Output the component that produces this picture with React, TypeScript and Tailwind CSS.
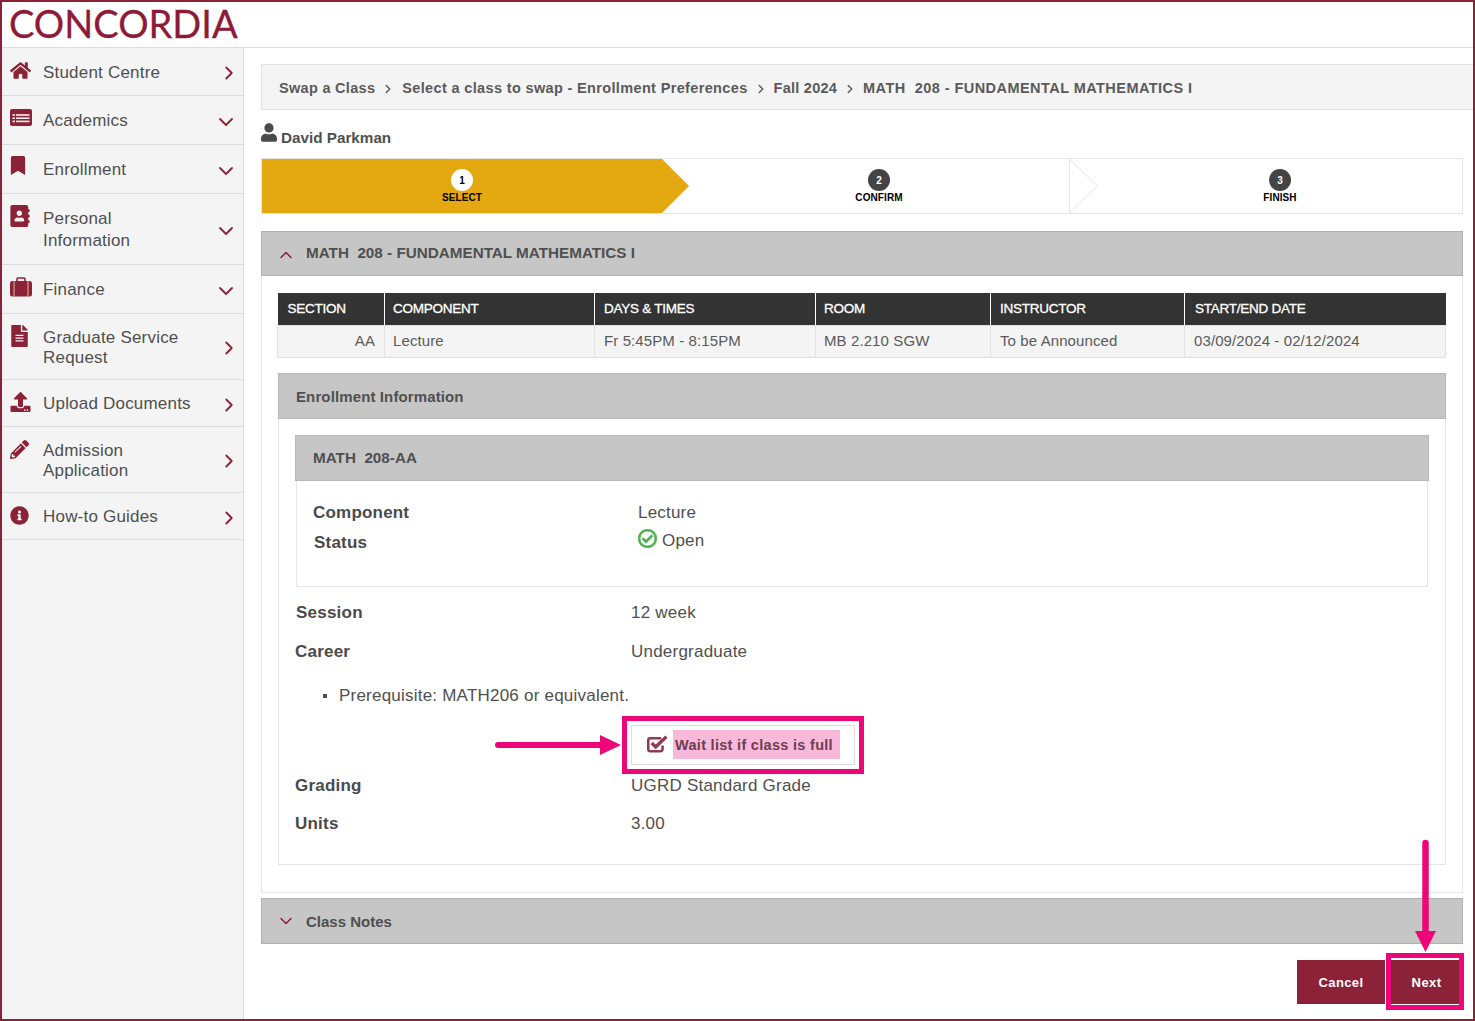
import React from "react";
import { ChevronRight, ChevronDown, ChevronUp } from "lucide-react";
import {
  FaHome, FaBookmark, FaAddressBook, FaFileAlt, FaUpload,
  FaPencilAlt, FaInfoCircle, FaUser, FaRegCheckCircle,
} from "react-icons/fa";

function ListAltIcon({ className }: { className?: string }) {
  return (
    <svg className={className} viewBox="0 0 22 17" fill="currentColor">
      <path d="M2 0 H20 a2 2 0 0 1 2 2 V15 a2 2 0 0 1 -2 2 H2 a2 2 0 0 1 -2 -2 V2 a2 2 0 0 1 2 -2 Z" />
      <g fill="#f7eef0">
        <rect x="2.5" y="5.2" width="2.5" height="1.6" />
        <rect x="6" y="5.2" width="13.5" height="1.6" />
        <rect x="2.5" y="8.4" width="2.5" height="1.6" />
        <rect x="6" y="8.4" width="13.5" height="1.6" />
        <rect x="2.5" y="11.6" width="2.5" height="1.6" />
        <rect x="6" y="11.6" width="13.5" height="1.6" />
      </g>
    </svg>
  );
}

function SuitcaseIcon({ className }: { className?: string }) {
  return (
    <svg className={className} viewBox="0 0 22 20" fill="currentColor">
      <path d="M7 4.5 V2 a1 1 0 0 1 1 -1 H14 a1 1 0 0 1 1 1 V4.5" fill="none" stroke="currentColor" strokeWidth="1.6" />
      <rect x="0" y="4" width="22" height="15.5" rx="2.5" />
      <rect x="3.6" y="4" width="0.9" height="15.5" fill="#e8c9a0" />
      <rect x="17.5" y="4" width="0.9" height="15.5" fill="#e8c9a0" />
    </svg>
  );
}

function CheckSquareIcon({ className }: { className?: string }) {
  return (
    <svg className={className} viewBox="0 0 20 17" fill="none" stroke="currentColor">
      <path d="M13.5 3 H3 a1.8 1.8 0 0 0 -1.8 1.8 V13.5 a1.8 1.8 0 0 0 1.8 1.8 H13 a1.8 1.8 0 0 0 1.8 -1.8 V10" strokeWidth="2.4" />
      <path d="M4.5 7.5 L8.3 11.2 L18.5 1.5" strokeWidth="3.2" />
    </svg>
  );
}

const menu = [
  { label: ["Student Centre"], Icon: FaHome, h: "h-[48px]", pad: "pt-[13px]", text: "pt-[14px]", iconCls: "w-[21px] h-[19px]", open: false, lh: "leading-[22px]" },
  { label: ["Academics"], Icon: ListAltIcon, h: "h-[49px]", pad: "pt-[13px]", text: "pt-[14px]", iconCls: "w-[22px] h-[17px]", open: true, lh: "leading-[22px]" },
  { label: ["Enrollment"], Icon: FaBookmark, h: "h-[49px]", pad: "pt-[11px]", text: "pt-[14px]", iconCls: "w-[16px] h-[19px]", open: true, lh: "leading-[22px]" },
  { label: ["Personal", "Information"], Icon: FaAddressBook, h: "h-[71px]", pad: "pt-[11px]", text: "pt-[14px]", iconCls: "w-[20px] h-[22px]", open: true, lh: "leading-[22px]" },
  { label: ["Finance"], Icon: SuitcaseIcon, h: "h-[49px]", pad: "pt-[12px]", text: "pt-[14px]", iconCls: "w-[22px] h-[20px]", open: true, lh: "leading-[22px]" },
  { label: ["Graduate Service", "Request"], Icon: FaFileAlt, h: "h-[66px]", pad: "pt-[11px]", text: "pt-[14px]", iconCls: "w-[19px] h-[22px]", open: false, lh: "leading-[20px]" },
  { label: ["Upload Documents"], Icon: FaUpload, h: "h-[47px]", pad: "pt-[12px]", text: "pt-[13px]", iconCls: "w-[21px] h-[20px]", open: false, lh: "leading-[22px]" },
  { label: ["Admission", "Application"], Icon: FaPencilAlt, h: "h-[66px]", pad: "pt-[13px]", text: "pt-[14px]", iconCls: "w-[19px] h-[19px]", open: false, lh: "leading-[20px]" },
  { label: ["How-to Guides"], Icon: FaInfoCircle, h: "h-[47px]", pad: "pt-[13px]", text: "pt-[13px]", iconCls: "w-[19px] h-[19px]", open: false, lh: "leading-[22px]" },
];

const columns = [
  { head: "SECTION", cell: "AA", w: "w-[107px]", cls: "text-right pr-[9px]", hcls: "pl-[10px]" },
  { head: "COMPONENT", cell: "Lecture", w: "w-[210px]", cls: "pl-[8px]", hcls: "pl-[8px]" },
  { head: "DAYS & TIMES", cell: "Fr 5:45PM - 8:15PM", w: "w-[221px]", cls: "pl-[9px]", hcls: "pl-[9px]" },
  { head: "ROOM", cell: "MB 2.210 SGW", w: "w-[175px]", cls: "pl-[8px]", hcls: "pl-[8px]" },
  { head: "INSTRUCTOR", cell: "To be Announced", w: "w-[194px]", cls: "pl-[9px]", hcls: "pl-[9px]" },
  { head: "START/END DATE", cell: "03/09/2024 - 02/12/2024", w: "w-[261px]", cls: "pl-[9px]", hcls: "pl-[10px]" },
];

function Step({ n, label, active, cls }: { n: number; label: string; active?: boolean; cls: string }) {
  return (
    <div className={`${cls} flex flex-col items-center pt-[10px]`}>
      <div className={`w-[22px] h-[22px] rounded-full flex items-center justify-center text-[10px] font-bold ${active ? "bg-white text-black" : "bg-[#444444] text-white"}`}>{n}</div>
      <div className="text-[10px] font-bold leading-[13px] text-black tracking-[0.1px]">{label}</div>
    </div>
  );
}

function InfoRow({ label, value, cls }: { label: string; value: string; cls: string }) {
  return (
    <div className={`flex ${cls}`}>
      <div className="w-[336px] font-bold text-[17px] leading-[24px] text-[#4a4a4a]">{label}</div>
      <div className="text-[17px] leading-[24px] text-[#4f4f4f]">{value}</div>
    </div>
  );
}

export default function App() {
  return (
    <div className="relative w-[1475px] h-[1021px] overflow-hidden border-2 border-[#8c2237] bg-white font-['Liberation_Sans',Arial,sans-serif] text-[#4f4f4f]">
      <header className="h-[46px] border-b border-[#dedede] pl-[7px] flex items-center">
        <span className="-mt-[3px] font-['Lato',sans-serif] text-[38px] leading-none text-[#8e1a38] [-webkit-text-stroke:0.3px_#8e1a38]">CONCORDIA</span>
      </header>
      <div className="flex h-[971px]">
        <aside className="w-[242px] shrink-0 bg-[#f4f4f4] border-r border-[#dcdcdc]">
          {menu.map(({ label, Icon, h, pad, text, iconCls, open, lh }) => (
            <div key={label[0]} className={`${h} border-b border-[#dcdcdc] flex pl-[8px]`}>
              <div className={`w-[33px] shrink-0 ${pad}`}>
                <Icon className={`${iconCls} text-[#8c2237]`} />
              </div>
              <div className={`flex-1 ${text} text-[17px] tracking-[0.2px] ${lh} text-[#4f4f4f]`}>
                {label.map((l) => <div key={l}>{l}</div>)}
              </div>
              <div className="w-[32px] shrink-0 flex items-center justify-center pt-[3px] pr-[2px]">
                {open
                  ? <ChevronDown size={24} strokeWidth={1.8} className="text-[#8c2237]" />
                  : <ChevronRight size={22} strokeWidth={2} className="text-[#8c2237] ml-[5px]" />}
              </div>
            </div>
          ))}
        </aside>
        <main className="flex-1 pl-[17px] pr-[10px] pt-[16px] min-w-0">
          <nav className="h-[46px] -mr-[10px] bg-[#f4f4f4] border border-r-0 border-[#e2e2e2] flex items-center pl-[17px] pt-[3px] text-[14.5px] font-bold text-[#5a5a5a] tracking-[0.3px]">
            <span>Swap a Class</span>
            <ChevronRight size={14} strokeWidth={2.5} className="mx-[6px] text-[#5a5a5a]" />
            <span className="ml-[1px] tracking-[0.35px]">Select a class to swap - Enrollment Preferences</span>
            <ChevronRight size={14} strokeWidth={2.5} className="mx-[6px] text-[#5a5a5a]" />
            <span className="tracking-[0.25px]">Fall 2024</span>
            <ChevronRight size={14} strokeWidth={2.5} className="mx-[6px] text-[#5a5a5a]" />
            <span className="whitespace-pre tracking-[0.45px]">MATH  208 - FUNDAMENTAL MATHEMATICS I</span>
          </nav>
          <div className="h-[48px] flex items-start pt-[13px]">
            <FaUser className="w-[16px] h-[19px] text-[#4a4a4a]" />
            <span className="ml-[4px] mt-[5px] text-[15.25px] leading-[20px] font-bold text-[#4f4f4f]">David Parkman</span>
          </div>
          <div className="relative h-[56px] border border-[#e6e6e6] flex">
            <div className="absolute left-0 top-0 h-[54px] w-[427px] bg-[#e4a811] [clip-path:polygon(0_0,400px_0,427px_27px,400px_54px,0_54px)]" />
            <Step n={1} label="SELECT" active cls="relative w-[400px]" />
            <div className="w-[27px]" />
            <Step n={2} label="CONFIRM" cls="w-[380px]" />
            <svg className="w-[29px] h-[54px] shrink-0" viewBox="0 0 29 54"><path d="M0.5 0 L28 27 L0.5 54 Z" fill="none" stroke="#e6e6e6" /></svg>
            <Step n={3} label="FINISH" cls="flex-1" />
          </div>
          <div className="mt-[17px] h-[45px] bg-[#c6c6c6] border border-[#b0b0b0] flex items-center pl-[14px]">
            <ChevronUp size={20} strokeWidth={1.8} className="text-[#8c2237] mt-[3px]" />
            <span className="ml-[10px] -mt-[1px] text-[15.25px] font-bold text-[#4f4f4f] whitespace-pre">MATH  208 - FUNDAMENTAL MATHEMATICS I</span>
          </div>
          <section className="h-[617px] border border-t-0 border-[#e6e6e6] px-[16px] pt-[17px]">
            <table className="-ml-[1px] w-[1168px] table-fixed border-collapse">
              <thead>
                <tr className="h-[32px] bg-[#333333] text-white text-[13.5px] tracking-[-0.25px] [-webkit-text-stroke:0.3px_#ffffff]">
                  {columns.map((c) => (
                    <th key={c.head} className={`${c.w} ${c.hcls} pt-[1px] text-left font-normal border-l border-white first:border-l-0`}>{c.head}</th>
                  ))}
                </tr>
              </thead>
              <tbody>
                <tr className="h-[32px] bg-[#f4f4f4] text-[15px] tracking-[0.1px] text-[#5a5a5a]">
                  {columns.map((c) => (
                    <td key={c.head} className={`${c.cls} border border-[#e2e2e2]`}>{c.cell}</td>
                  ))}
                </tr>
              </tbody>
            </table>
            <div className="mt-[15px] h-[46px] bg-[#c6c6c6] border border-[#b8b8b8] flex items-center pl-[17px] pt-[4px] text-[15px] font-bold text-[#4f4f4f] tracking-[0.12px]">Enrollment Information</div>
            <div className="h-[446px] border border-t-0 border-[#e6e6e6] px-[16px] pt-[16px]">
              <div className="h-[46px] bg-[#c6c6c6] border border-[#b8b8b8] flex items-center pl-[17px] pt-[2px] text-[15.25px] font-bold text-[#4f4f4f] whitespace-pre">MATH  208-AA</div>
              <div className="mx-[1px] h-[106px] border border-t-0 border-[#e6e6e6] pl-[16px] pt-[21px] tracking-[0.2px]">
                <div className="flex h-[28px]">
                  <div className="w-[325px] text-[17px] font-bold leading-[22px] text-[#4a4a4a]">Component</div>
                  <div className="text-[17px] leading-[22px]">Lecture</div>
                </div>
                <div className="flex h-[28px]">
                  <div className="w-[324px] ml-[1px] text-[17px] font-bold leading-[26px] text-[#4a4a4a]">Status</div>
                  <div className="flex items-start">
                    <FaRegCheckCircle stroke="currentColor" strokeWidth={22} className="w-[19px] h-[19px] text-[#4fb14f] -mt-[1px]" />
                    <span className="ml-[5px] text-[17px] leading-[22px]">Open</span>
                  </div>
                </div>
              </div>
              <div className="tracking-[0.22px]">
                <InfoRow label="Session" value="12 week" cls="mt-[14px] ml-[1px] h-[39px] [&>div:first-child]:w-[335px]" />
                <InfoRow label="Career" value="Undergraduate" cls="h-[38px]" />
                <div className="ml-[28px] flex items-center h-[24px] mt-[6px] text-[17px]">
                  <span className="w-[4px] h-[4px] bg-[#4f4f4f] mr-[12px]" />
                  <span>Prerequisite: MATH206 or equivalent.</span>
                </div>
                <div className="ml-[327px] w-[242px] h-[58px] mt-[8px] border-[5px] border-[#ec0677] p-[4px]">
                  <div className="h-[40px] border border-[#dcdcdc] flex items-center pl-[15px]">
                    <CheckSquareIcon className="w-[21px] h-[18px] text-[#8f3a52] -mt-[2px]" />
                    <span className="ml-[5px] h-[29px] w-[167px] bg-[#f7b8d9] flex items-center pl-[2px] pt-[3px] text-[14.5px] font-bold text-[#6f3d50] tracking-[0.3px]">Wait list if class is full</span>
                  </div>
                </div>
                <InfoRow label="Grading" value="UGRD Standard Grade" cls="h-[38px]" />
                <InfoRow label="Units" value="3.00" cls="h-[30px]" />
              </div>
            </div>
          </section>
          <div className="mt-[5px] h-[46px] bg-[#c6c6c6] border border-[#b0b0b0] flex items-center pl-[14px]">
            <ChevronDown size={20} strokeWidth={1.8} className="text-[#8c2237]" />
            <span className="ml-[10px] pt-[2px] text-[15px] font-bold text-[#4f4f4f]">Class Notes</span>
          </div>
          <div className="mt-[16px] flex justify-end pr-[4px]">
            <button className="w-[88px] h-[44px] pt-[2px] bg-[#8c2237] text-white text-[13px] font-bold tracking-[0.4px]">Cancel</button>
            <button className="ml-[6px] w-[68px] h-[44px] pt-[2px] bg-[#8c2237] text-white text-[13px] font-bold tracking-[0.4px] pl-[3px]">Next</button>
          </div>
        </main>
      </div>
      {/* annotations */}
      <div className="absolute left-[1384px] top-[951px] w-[78px] h-[57px] border-[5px] border-[#ec0677]" />
      <svg className="absolute left-[1411px] top-[837px] w-[25px] h-[113px]" viewBox="0 0 25 113">
        <path d="M12.5 4 V95" stroke="#ec0677" strokeWidth="6.5" strokeLinecap="round" fill="none" />
        <path d="M2 92 H23 L12.5 113 Z" fill="#ec0677" />
      </svg>
      <svg className="absolute left-[491px] top-[732px] w-[130px] h-[22px]" viewBox="0 0 130 22">
        <path d="M5 11 H110" stroke="#ec0677" strokeWidth="6" strokeLinecap="round" fill="none" />
        <path d="M107 1 L128 11 L107 21 Z" fill="#ec0677" />
      </svg>
    </div>
  );
}
